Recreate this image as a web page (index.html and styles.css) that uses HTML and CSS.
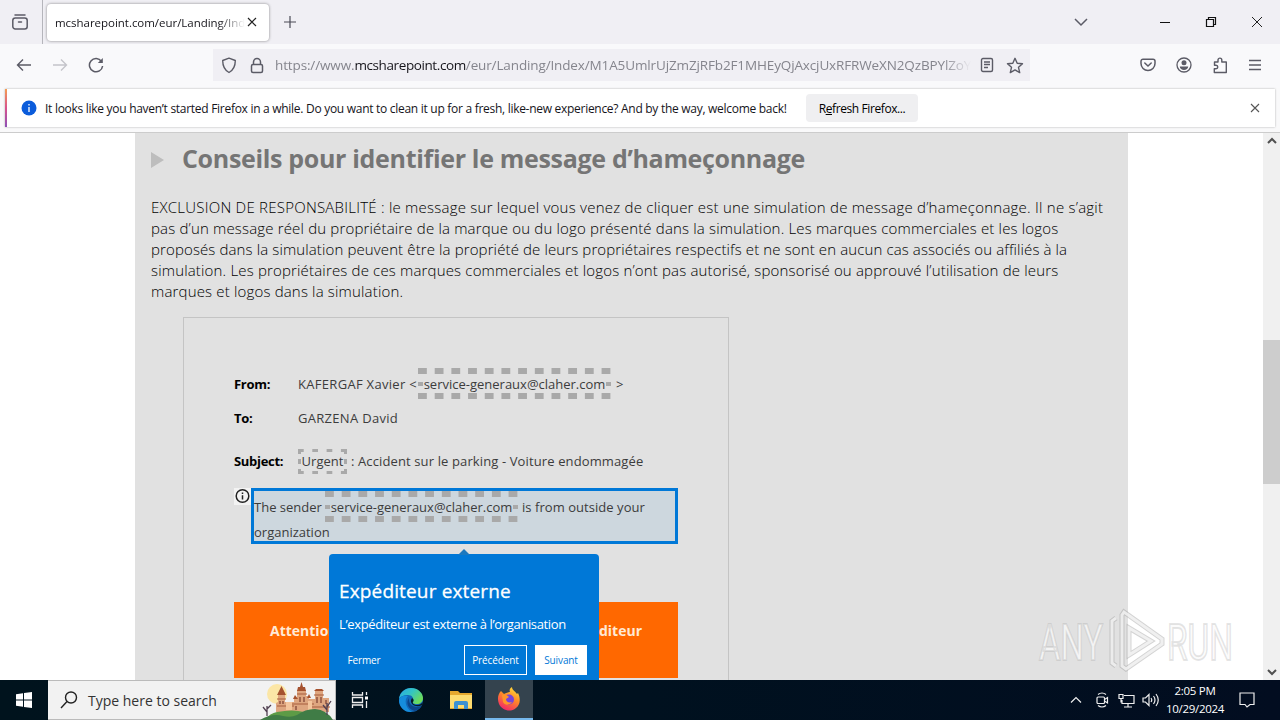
FILE: index.html
```
<!DOCTYPE html>
<html lang="fr">
<head>
    <meta charset="utf-8">
    <title>mcsharepoint.com</title>
    <link rel="stylesheet" href="styles.css">
</head>
<body>

<div class="tabbar">
    <div class="view">
        <svg width="18" height="18" viewBox="0 0 18 18" fill="none" stroke="#5b5b66" stroke-width="1.5" stroke-linecap="round"><path d="M4 2h10"/><rect x="1.8" y="5" width="14.4" height="11" rx="2.5"/><path d="M7.5 9h3"/></svg>
    </div>
    <div class="tab">
        <span class="tab-title">mcsharepoint.com/eur/Landing/Index</span>
        <svg width="10" height="10" viewBox="0 0 10 10" stroke="#222" stroke-width="1.2"><path d="M1 1l8 8M9 1l-8 8"/></svg>
    </div>
    <svg class="plus" width="14" height="14" viewBox="0 0 14 14" stroke="#4a4a55" stroke-width="1.2"><path d="M7 1v12M1 7h12"/></svg>
    <div class="window-buttons">
        <svg width="14" height="14" viewBox="0 0 14 14" fill="none" stroke="#5b5b66" stroke-width="1.5"><path d="M1 4l6 6 6-6"/></svg>
        <svg class="min" width="12" height="12" viewBox="0 0 12 12" stroke="#111" stroke-width="1"><path d="M1 6.5h10"/></svg>
        <svg class="max" width="12" height="12" viewBox="0 0 12 12" fill="none" stroke="#111" stroke-width="1.2"><path d="M1.5 3.5h7v7h-7zM3.5 3.5v-2h7v7h-2"/></svg>
        <svg width="12" height="12" viewBox="0 0 12 12" stroke="#222" stroke-width="1"><path d="M1 1l10 10M11 1L1 11"/></svg>
    </div>
</div>

<div class="toolbar">
    <div class="nav">
        <svg width="16" height="16" viewBox="0 0 16 16" fill="none" stroke="#5b5b66" stroke-width="1.4"><path d="M15 8H2M7 2.5L1.5 8 7 13.5"/></svg>
        <svg width="16" height="16" viewBox="0 0 16 16" fill="none" stroke="#c4c4ca" stroke-width="1.4"><path d="M1 8h13M9 2.5L14.5 8 9 13.5"/></svg>
        <svg width="16" height="16" viewBox="0 0 16 16" fill="none" stroke="#5b5b66" stroke-width="1.5"><path d="M13.5 4.5A6.6 6.6 0 1 0 14.6 9"/><path d="M14.8 1v5H9.8z" fill="#5b5b66" stroke="none"/></svg>
    </div>
    <div class="urlbar">
        <svg width="16" height="17" viewBox="0 0 16 17" fill="none" stroke="#5b5b66" stroke-width="1.4"><path d="M8 1.2l6.3 2.3c0 6-1.6 9.5-6.3 12C3.3 13 1.7 9.5 1.7 3.5z" stroke-linejoin="round"/></svg>
        <svg class="lock" width="14" height="17" viewBox="0 0 14 17" fill="none" stroke="#5b5b66" stroke-width="1.5"><rect x="1.5" y="7.5" width="11" height="8" rx="1.5"/><path d="M3.5 7.5V5a3.5 3.5 0 0 1 7 0v2.5"/></svg>
        <span class="url">https://www.<b>mcsharepoint.com</b>/eur/Landing/Index/M1A5UmlrUjZmZjRFb2F1MHEyQjAxcjUxRFRWeXN2QzBPYlZoY</span>
        <svg class="reader" width="14" height="16" viewBox="0 0 14 16" fill="none" stroke="#5b5b66" stroke-width="1.4"><rect x="1.5" y="1.5" width="11" height="13" rx="1.5"/><path d="M4 5h6M4 7.5h6M4 10.5h4"/></svg>
        <svg width="18" height="17" viewBox="0 0 18 17" fill="none" stroke="#5b5b66" stroke-width="1.4" stroke-linejoin="round"><path d="M9 1.3l2.2 4.9 5.3.5-4 3.6 1.2 5.3L9 12.9l-4.7 2.7 1.2-5.3-4-3.6 5.3-.5z"/></svg>
    </div>
    <div class="tools">
        <svg width="16" height="14" viewBox="0 0 16 14" fill="none" stroke="#5b5b66" stroke-width="1.5" stroke-linecap="round"><path d="M3 1.2h10a2 2 0 0 1 2 2v2.3a7 7 0 0 1-14 0V3.2a2 2 0 0 1 2-2z"/><path d="M4.8 5L8 8l3.2-3"/></svg>
        <svg width="16" height="16" viewBox="0 0 16 16" fill="none" stroke="#5b5b66" stroke-width="1.3"><circle cx="8" cy="8" r="7"/><circle cx="8" cy="5.8" r="2.5" fill="#5b5b66" stroke="none"/><path d="M3.8 9.5h8.4c0 2-2 3.500-4.200 3.500s-4.200-1.500-4.200-3.500z" fill="#5b5b66" stroke="none"/></svg>
        <svg width="16" height="17" viewBox="0 0 16 17" fill="none" stroke="#5b5b66" stroke-width="1.4" stroke-linejoin="round"><path d="M2.5 5h3.500V3a1.900 1.900 0 0 1 3.800 0v2h4.500v10.500h-12v-3.700H4a1.800 1.800 0 0 0 0-3.600H2.500z"/></svg>
        <svg width="14" height="14" viewBox="0 0 14 14" stroke="#5b5b66" stroke-width="1.4"><path d="M1 2.5h12M1 7h12M1 11.5h12"/></svg>
    </div>
</div>

<div class="notice-wrap">
    <div class="notice">
        <svg width="16" height="16" viewBox="0 0 16 16"><circle cx="8" cy="8" r="7.5" fill="#0b5cdb"/><path d="M8 4v1.5M8 7v5" stroke="#fff" stroke-width="1.3"/></svg>
        <span class="notice-text">It looks like you haven’t started Firefox in a while. Do you want to clean it up for a fresh, like-new experience? And by the way, welcome back!</span>
        <button class="refresh">R<u>e</u>fresh Firefox...</button>
        <svg class="notice-close" width="10" height="10" viewBox="0 0 10 10" stroke="#555" stroke-width="1.1"><path d="M1 1l8 8M9 1L1 9"/></svg>
    </div>
</div>

<div class="viewport">
    <div class="page">
        <div class="heading">
            <span class="arrow"></span>
            <h1>Conseils pour identifier le message d’hameçonnage</h1>
        </div>
        <p class="disclaimer">
            <span class="l1">EXCLUSION DE RESPONSABILITÉ : le message sur lequel vous venez de cliquer est une simulation de message d’hameçonnage. Il ne s’agit</span>
            <span class="l2">pas d’un message réel du propriétaire de la marque ou du logo présenté dans la simulation. Les marques commerciales et les logos</span>
            <span class="l3">proposés dans la simulation peuvent être la propriété de leurs propriétaires respectifs et ne sont en aucun cas associés ou affiliés à la</span>
            <span class="l4">simulation. Les propriétaires de ces marques commerciales et logos n’ont pas autorisé, sponsorisé ou approuvé l’utilisation de leurs</span>
            <span class="l5">marques et logos dans la simulation.</span>
        </p>

        <div class="mail">
            <div class="row from"><b>From:</b><span class="name">KAFERGAF Xavier &lt;</span><span class="hint">service-generaux@claher.com</span><span class="gt">&gt;</span></div>
            <div class="row to"><b>To:</b><span class="wide">GARZENA David</span></div>
            <div class="row subject"><b>Subject:</b><span class="hint-small">Urgent</span><span class="subject-text">: Accident sur le parking - Voiture endommagée</span></div>
            <div class="sender">
                <div class="info"><svg width="16" height="16" viewBox="0 0 16 16" fill="none" stroke="#222" stroke-width="1.5"><circle cx="8.5" cy="8" r="6.3"/><path d="M8.5 4.5V6M8.5 7.2v4.300"/></svg></div>
                <div class="sender-box">
                    <div class="sender-line"><span class="s1">The sender</span><span class="hint">service-generaux@claher.com</span><span class="s2">is from outside your</span></div>
                    <div class="sender-line2">organization</div>
                </div>
            </div>
            <div class="warning"><span>Attention</span><span>éditeur</span></div>
        </div>
    </div>

    <div class="popup">
        <h2>Expéditeur externe</h2>
        <p>L’expéditeur est externe à l’organisation</p>
        <div class="popup-buttons">
            <button class="close">Fermer</button>
            <button class="prev">Précédent</button>
            <button class="next">Suivant</button>
        </div>
    </div>

    <div class="scrollbar">
        <svg width="10" height="8" viewBox="0 0 10 8" fill="none" stroke="#505050" stroke-width="2"><path d="M1 6l4-4 4 4"/></svg>
        <div class="thumb"></div>
        <svg class="down" width="10" height="8" viewBox="0 0 10 8" fill="none" stroke="#505050" stroke-width="2"><path d="M1 2l4 4 4-4"/></svg>
    </div>

    <div class="watermark">
        <svg width="204" height="68" viewBox="0 0 204 68">
            <g class="wm-text"><text x="4" y="52" textLength="64" lengthAdjust="spacingAndGlyphs">ANY</text><text x="132" y="52" textLength="66" lengthAdjust="spacingAndGlyphs">RUN</text></g>
            <g class="wm-shade"><path d="M81 10l-4 3v42l4 3M89 4l-2 3v51l4 3 36-25v-5L89 4zM94 20v27l22-14z"/></g>
            <g class="wm-light"><path d="M81 10l-4 3v42l4 3M89 4l-2 3v51l4 3 36-25v-5L89 4zM94 20v27l22-14z"/></g>
        </svg>
    </div>
</div>

<div class="taskbar">
    <div class="start"><svg width="16" height="16" viewBox="0 0 16 16" fill="#fff"><path d="M0 2.2l7-1v6.3H0zM8 1l8-1v7.5H8zM0 8.500h7v6.300l-7-1zM8 8.500h8V16l-8-1z"/></svg></div>
    <div class="search">
        <svg width="18" height="18" viewBox="0 0 18 18" fill="none" stroke="#222" stroke-width="1.4"><circle cx="11" cy="6.5" r="5.5"/><path d="M7 10.5L1 17"/></svg>
        <span>Type here to search</span>
        <svg class="castle" width="75" height="39" viewBox="0 0 75 39">
            <circle cx="17" cy="13" r="10" fill="#fbe6a6"/>
            <path d="M16 31V22l2-1v-8h7v8h9v-3h3V9h9v6h3v3h6V9h8v8h6v14z" fill="#dea680"/>
            <path d="M17 14l4.500-9L26 14zM37 10l1-4h2l1.500-5L43 6h2l1 4zM54 10l2-2h6l2 2zM33 18l2-4 3 4zM47 17l2-4 2 4z" fill="#a5522f"/>
            <path d="M17 18h9M28 23h26M37 13h10M54 14h10M17 25h17M50 26h20" stroke="#a65d3c" stroke-width="1.2"/>
            <path d="M20 20v3M23 20v3M31 25v4M36 25v4M40 16v5M44 16v5M57 16v6M61 16v6M66 19v4" stroke="#7b3e31" stroke-width="1.2"/>
            <path d="M26 21h6v8h-6zM48 20h4v9h-4z" fill="#f4c59c"/>
            <path d="M5 39q5-7 12-8 16-3 27 0l9-1q14 1 19 9z" fill="#5d9b46"/>
            <path d="M0 39q12-7 23-4 8 2 14-1 8-6 18-6 12 1 18 11z" fill="#407c46"/>
            <path d="M7 35V25m0 6l-4-5m4 2l4-4M67 34V22m0 7l-4-5m4 2l4-6" fill="none" stroke="#514052" stroke-width="1.3"/>
        </svg>
    </div>
    <div class="app"><svg width="18" height="16" viewBox="0 0 18 16" fill="none" stroke="#eee" stroke-width="1.3"><path d="M1.5 0v3h10V0M1.5 16v-3h10v3M1.5 5.500h10v5h-10zM15.500 0v3M15.500 9v7"/><path d="M14 4.500h3v3h-3z" fill="#fff" stroke="none"/></svg></div>
    <div class="app edge">
        <svg width="26" height="26" viewBox="0 0 26 26"><defs><linearGradient id="eg" x1="0" y1="0" x2="1" y2=".6"><stop offset="0" stop-color="#29a8e8"/><stop offset=".5" stop-color="#33c4c4"/><stop offset="1" stop-color="#6edc57"/></linearGradient></defs><circle cx="13" cy="13" r="12" fill="#1268b8"/><path d="M1 12C2 5 7 1 13 1c7 0 12 5 12 10 0 4-3 6-6 6-4 0-5-1-4-3 1-3-1-6-5-6-5 0-8 2-9 4z" fill="url(#eg)"/><path d="M1 13c1-4 5-5 9-4-4 3-3 12 4 16C7 26 1 20 1 13z" fill="#168ddd"/><path d="M11 11c-1 5 3 9 8 9 2 0 4-1 5-2-1 3-4 5-7 6-6-1-10-8-6-13z" fill="#0c4589"/><path d="M14 11c2 1 2 3 1 4s1 3 4 3c3 0 4-1 6-3l-1 3c-5 3-12 0-11-5z" fill="#061b27"/></svg>
    </div>
    <div class="app">
        <svg width="22" height="20" viewBox="0 0 22 20"><path d="M0 1h8l2 2h12v16H0z" fill="#e5a82e"/><path d="M0 5h22v13H0z" fill="#fddc70"/><path d="M4 19v-6q0-2 2-2h10q2 0 2 2v6h-4v-4H8v4z" fill="#3c91d2"/></svg>
    </div>
    <div class="app active">
        <svg width="24" height="24" viewBox="0 0 24 24"><defs><linearGradient id="fg" x1=".8" y1="0" x2=".3" y2="1"><stop offset="0" stop-color="#ffe23b"/><stop offset=".45" stop-color="#ff8a27"/><stop offset="1" stop-color="#f0256b"/></linearGradient></defs><path d="M4 4l3 3c2-1 4-2 6-2-1-2 0-4 2-5 0 3 3 4 5 7l1-1c3 6 2 12-2 15-6 5-14 2-17-4C0 12 1 7 4 4z" fill="url(#fg)"/><circle cx="12" cy="12.5" r="5" fill="#7744d8"/><path d="M5 8c3-1 5 0 7 2l-3 2c0 3 3 4 6 3-2 3-7 4-9 0z" fill="#ff9629"/></svg>
    </div>
    <div class="tray">
        <svg width="12" height="8" viewBox="0 0 12 8" fill="none" stroke="#eee" stroke-width="1.2"><path d="M1 6.5l5-5 5 5"/></svg>
        <svg class="cam" width="13" height="16" viewBox="0 0 13 16" fill="none" stroke="#eee" stroke-width="1.2"><rect x="1" y="5" width="7.5" height="6.5" rx="1"/><path d="M8.5 7.5l3-2V11l-3-2M2 2.5q4-3 8 0M2 13.5q4 3 8 0"/></svg>
        <svg class="net" width="17" height="15" viewBox="0 0 17 15" fill="none" stroke="#eee" stroke-width="1.2"><path d="M6 2.5h10v8H4V7M10 10.500V14M6 14h8M1 1.500h4v4H1zM3 5.500v4"/></svg>
        <svg class="sound" width="17" height="14" viewBox="0 0 17 14" fill="none" stroke="#eee" stroke-width="1.2"><path d="M1 5h2.500L7 1.500v11L3.500 9H1zM9 5q1.500 2 0 4M11.500 3q3 4 0 8M14 1q4.500 6 0 12"/></svg>
        <div class="clock"><span>2:05 PM</span><span>10/29/2024</span></div>
        <svg class="bubble" width="16" height="16" viewBox="0 0 16 16" fill="none" stroke="#eee" stroke-width="1.2"><path d="M1 1h14v11.500h-4L8 15l-2-2.500H1z"/></svg>
    </div>
</div>

</body>
</html>
```
FILE: styles.css
```
* {
    box-sizing: border-box;
}
body {
    margin: 0;
    width: 1280px;
    height: 720px;
    overflow: hidden;
    display: flex;
    flex-direction: column;
    font-family: "Open Sans", "Noto Sans", sans-serif;
    background: #fff;
    color: #15141a;
}
svg {
    display: block;
    flex: none;
}
span, b, h1, h2 {
    white-space: nowrap;
}
button {
    font-family: inherit;
    border: none;
    padding: 0;
    white-space: nowrap;
}

/* tabs */
.tabbar {
    height: 44px;
    flex: none;
    background: #f0eff4;
    display: flex;
    align-items: center;
}
.view {
    width: 43px;
    height: 44px;
    padding: 13px 0 0 11px;
    border-right: 1px solid #b5b5bb;
}
.tab {
    width: 222px;
    height: 37px;
    margin-left: 4px;
    padding: 0 12px 0 8px;
    display: flex;
    align-items: center;
    justify-content: space-between;
    background: #fff;
    border-radius: 4px;
    box-shadow: 0 0 3px rgba(0, 0, 0, 0.45);
}
.tab-title {
    width: 190px;
    overflow: hidden;
    font-size: 11.5px;
    letter-spacing: -0.03px;
    -webkit-mask-image: linear-gradient(to right, #000 86%, transparent);
}
.plus {
    margin-left: 14px;
}
.window-buttons {
    margin-left: auto;
    margin-right: 17px;
    display: flex;
    align-items: center;
}
.min {
    margin-left: 71px;
}
.max {
    margin: 0 34px;
}

/* toolbar */
.toolbar {
    height: 44px;
    flex: none;
    background: #f9f9fb;
    display: flex;
    align-items: center;
    padding-bottom: 2px;
}
.nav {
    width: 213px;
    display: flex;
    gap: 20px;
    padding-left: 16px;
}
.urlbar {
    width: 817px;
    height: 32px;
    background: #f0eff4;
    display: flex;
    align-items: center;
    padding-left: 8px;
}
.lock {
    margin: 0 11px 0 13px;
}
.url {
    width: 696px;
    overflow: hidden;
    font-size: 13.5px;
    letter-spacing: -0.13px;
    color: #85858d;
    -webkit-mask-image: linear-gradient(to right, #000 96%, transparent);
}
.url b {
    font-weight: 400;
    letter-spacing: -0.4px;
    color: #15141a;
}
.reader {
    margin: 0 12px 0 9px;
}
.tools {
    display: flex;
    align-items: center;
    gap: 20px;
    margin-left: 110px;
}

/* refresh message */
.notice-wrap {
    height: 45px;
    flex: none;
    background: #f9f9fa;
    border-bottom: 1px solid #ccc;
    padding: 1px 5px 0;
}
.notice {
    height: 38px;
    display: flex;
    align-items: center;
    padding-left: 14px;
    border-left: 2px solid;
    border-image: linear-gradient(#f5a04f, #d8528d, #8950b8) 1;
    background: #fff;
    box-shadow: 0 0 2px rgba(0, 0, 0, 0.3);
}
.notice-text {
    width: 742px;
    margin-left: 8px;
    font-size: 12px;
    letter-spacing: -0.285px;
}
.refresh {
    width: 112px;
    height: 28px;
    margin-left: 19px;
    background: #efeff1;
    border-radius: 4px;
    font-size: 12px;
    letter-spacing: -0.4px;
}
.notice-close {
    margin-left: auto;
    margin-right: 15px;
}

/* web page */
.viewport {
    position: relative;
    height: 547px;
    flex: none;
    overflow: hidden;
    display: flex;
    justify-content: space-between;
}
.page {
    width: 993px;
    height: 547px;
    margin-left: 135px;
    padding: 0 16px;
    background: #e1e1e1;
    overflow: hidden;
}
.heading {
    height: 54px;
    display: flex;
    align-items: center;
}
.arrow {
    margin-right: 18px;
    border-left: 13px solid #bdbdbd;
    border-top: 8px solid transparent;
    border-bottom: 8px solid transparent;
}
h1 {
    margin: 0;
    padding-bottom: 4px;
    font-size: 25px;
    letter-spacing: -0.32px;
    color: #757575;
}
.disclaimer {
    margin: 10px 0 15px;
    line-height: 21px;
    font-size: 15px;
    font-weight: 300;
    letter-spacing: 0.17px;
    color: #000;
}
.disclaimer span {
    display: block;
}
.disclaimer .l1 {
    letter-spacing: 0.235px;
}
.disclaimer .l3 {
    letter-spacing: 0.12px;
}
.mail {
    width: 546px;
    height: 400px;
    margin-left: 32px;
    padding: 50px 50px 0;
    border: 1px solid #c4c4c4;
    font-size: 13px;
    color: #3c3c3c;
}
.row {
    display: flex;
    align-items: center;
}
.row b {
    width: 64px;
    color: #000;
    letter-spacing: -0.3px;
}
.from {
    height: 31px;
}
.to {
    height: 38px;
}
.subject {
    height: 48px;
}
.name {
    width: 120px;
    letter-spacing: 0.3px;
}
.wide {
    letter-spacing: 0.3px;
}
.hint {
    --dash: linear-gradient(to right, #a9a9a9 9px, transparent 9px);
    --side: linear-gradient(#a9a9a9, #a9a9a9);
    width: 193px;
    height: 31px;
    line-height: 33px;
    text-align: center;
    background:
        var(--dash) 0 0 / 16.7px 6px repeat-x,
        var(--dash) 0 100% / 16.7px 6px repeat-x,
        var(--side) 0 50% / 5px 4px no-repeat,
        var(--side) 100% 50% / 5px 4px no-repeat;
}
.gt {
    margin-left: 5px;
}
.hint-small {
    --dash: linear-gradient(to right, #a9a9a9 6px, transparent 6px);
    --side: linear-gradient(#a9a9a9 5px, transparent 5px);
    width: 49px;
    height: 25px;
    line-height: 25px;
    text-align: center;
    background:
        var(--dash) 0 0 / 14.3px 3px repeat-x,
        var(--dash) 0 100% / 14.3px 3px repeat-x,
        var(--side) 0 0 / 3px 10px repeat-y,
        var(--side) 100% 0 / 3px 10px repeat-y;
}
.subject-text {
    margin-left: 4px;
    letter-spacing: 0.12px;
}
.sender {
    display: flex;
    margin-top: 3px;
}
.info {
    width: 17px;
    height: 17px;
    background: #f3f3f3;
}
.sender-box {
    width: 427px;
    height: 56px;
    border: 3px solid #0078d7;
    background: #cdd7de;
}
.sender-line {
    display: flex;
    align-items: center;
    height: 31px;
}
.s1 {
    width: 71px;
}
.s2 {
    margin-left: 4px;
    letter-spacing: 0.05px;
}
.sender-line2 {
    line-height: 20px;
}
.warning {
    height: 76px;
    margin-top: 58px;
    padding: 19px 36px;
    display: flex;
    justify-content: space-between;
    background: #ff6800;
    color: #ffe9d5;
    font-size: 14px;
    font-weight: 700;
}

.popup {
    position: absolute;
    left: 329px;
    top: 421px;
    width: 270px;
    height: 140px;
    padding: 24px 12px 0 10px;
    border-radius: 4px;
    background: #0078d7;
    color: #fff;
}
.popup::before {
    content: "";
    position: absolute;
    left: 129px;
    top: -5px;
    border: 6px solid transparent;
    border-top: none;
    border-bottom-color: #1b78bf;
}
.popup h2 {
    margin: 0;
    font-size: 19px;
    line-height: 27px;
    font-weight: 500;
    letter-spacing: 0.15px;
    -webkit-text-stroke: 0.3px #fff;
}
.popup p {
    margin: 9px 0 11px;
    font-size: 13px;
    line-height: 20px;
    letter-spacing: -0.36px;
    white-space: nowrap;
}
.popup-buttons {
    display: flex;
}
.popup-buttons button {
    height: 30px;
    font-size: 10px;
    letter-spacing: -0.1px;
    color: #fff;
    background: none;
}
.popup-buttons .close {
    width: 50px;
}
.popup-buttons .prev {
    width: 63px;
    margin-left: auto;
    border: 1px solid #fff;
}
.popup-buttons .next {
    width: 52px;
    margin-left: 8px;
    background: #fff;
    color: #0078d7;
}

.scrollbar {
    width: 17px;
    padding: 4px 0;
    background: #f0f0f0;
    display: flex;
    flex-direction: column;
    align-items: center;
}
.thumb {
    width: 17px;
    height: 144px;
    margin-top: 195px;
    background: #cdcdcd;
}
.down {
    margin-top: auto;
}
.watermark {
    position: absolute;
    left: 1035px;
    top: 475px;
}
.wm-text text {
    font: 400 50px "Roboto", sans-serif;
    fill: rgba(250, 250, 250, 0.8);
    stroke: rgba(140, 140, 140, 0.22);
    stroke-width: 2px;
}
.wm-shade path {
    fill: none;
    stroke: rgba(160, 160, 160, 0.45);
    stroke-width: 5px;
}
.wm-light path {
    fill: none;
    stroke: rgba(250, 250, 250, 0.75);
    stroke-width: 3px;
}

/* taskbar */
.taskbar {
    height: 40px;
    flex: none;
    display: flex;
    background: linear-gradient(to right, #00131d, #00111f 50%, #020d20);
    color: #fff;
}
.start {
    width: 48px;
    padding: 12px 16px;
}
.search {
    width: 288px;
    display: flex;
    align-items: center;
    padding-left: 12px;
    background: #f2f2f2;
    border: 1px solid #bbb;
    border-left: none;
    color: #333;
    font-size: 14px;
}
.search span {
    margin-left: 10px;
}
.castle {
    margin-left: auto;
}
.app {
    width: 48px;
    display: flex;
    align-items: center;
    justify-content: center;
}
.edge {
    width: 53px;
}
.active {
    background: #34434e;
    border-bottom: 2px solid #76b9ed;
}
.tray {
    margin-left: auto;
    display: flex;
    align-items: center;
}
.tray svg:first-child {
    margin-right: 1px;
}
.cam {
    margin-left: 13px;
}
.net {
    margin-left: 9px;
}
.sound {
    margin-left: 7px;
}
.clock {
    width: 60px;
    margin-left: 6px;
    display: flex;
    flex-direction: column;
    align-items: center;
    font-size: 11.5px;
    line-height: 18px;
    letter-spacing: -0.3px;
}
.bubble {
    margin: 0 25px 0 14px;
}
```
